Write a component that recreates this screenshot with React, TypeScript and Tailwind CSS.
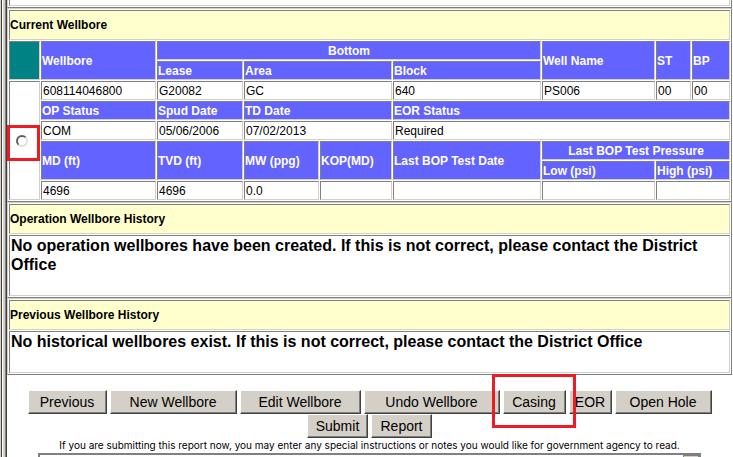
import type { ReactNode } from "react";

const edge =
  "border border-t-[#808080] border-l-[#808080] border-r-[#d4d0c8] border-b-[#d4d0c8]";
const outset =
  "border border-t-[#d4d0c8] border-l-[#d4d0c8] border-r-[#808080] border-b-[#808080]";

type CellProps = { children?: ReactNode; rows?: number; cols?: number; center?: boolean };

function Head({ children, rows, cols, center }: CellProps) {
  return (
    <th
      rowSpan={rows}
      colSpan={cols}
      className={`${edge} bg-[#6363ff] p-0 font-bold text-white ${center ? "text-center" : "text-left"}`}
    >
      {children}
    </th>
  );
}

function Data({ children, rows, cols }: CellProps) {
  return (
    <td rowSpan={rows} colSpan={cols} className={`${edge} bg-white px-px py-0`}>
      {children}
    </td>
  );
}

function Title({ children, cols }: { children: string; cols?: number }) {
  return (
    <tr className="h-[30px]">
      <th colSpan={cols} className={`${edge} bg-[#ffffce] p-0 text-left font-bold`}>
        {children}
      </th>
    </tr>
  );
}

const tableClass = "w-full table-fixed border-separate border-spacing-px text-xs leading-4";

function Message({ title, children, tall }: { title: string; children: string; tall?: boolean }) {
  return (
    <section className={outset}>
      <table className={tableClass}>
        <tbody>
          <Title>{title}</Title>
          <tr className={tall ? "h-[61px]" : "h-[42px]"}>
            <td className={`${edge} px-px py-0 align-top text-base leading-[19px] font-bold`}>{children}</td>
          </tr>
        </tbody>
      </table>
    </section>
  );
}

function Button({ children, width }: { children: string; width: string }) {
  return (
    <button
      type="button"
      className={`h-6 border border-t-white border-l-white border-r-[#404040] border-b-[#404040] bg-[#d4d0c8] text-center text-sm leading-5 shadow-[inset_-1px_-1px_0_#808080] ${width}`}
    >
      {children}
    </button>
  );
}

function WellboreTable() {
  return (
    <section className={outset}>
      <table className={tableClass}>
        <colgroup>
          <col className="w-[31px]" />
          <col className="w-[115px]" />
          <col className="w-[86px]" />
          <col className="w-[75px]" />
          <col className="w-[72px]" />
          <col />
          <col className="w-[113px]" />
          <col className="w-[35px]" />
          <col className="w-[38px]" />
        </colgroup>
        <tbody>
          <Title cols={9}>Current Wellbore</Title>
          <tr className="h-[19px]">
            <td rowSpan={2} className={`${edge} bg-[#008284]`} />
            <Head rows={2}>Wellbore</Head>
            <Head cols={4} center>Bottom</Head>
            <Head rows={2}>Well Name</Head>
            <Head rows={2}>ST</Head>
            <Head rows={2}>BP</Head>
          </tr>
          <tr className="h-[19px]">
            <Head>Lease</Head>
            <Head cols={2}>Area</Head>
            <Head>Block</Head>
          </tr>
          <tr className="h-[19px]">
            <td rowSpan={6} className={`${edge} bg-white p-0`}>
              <div className="relative flex justify-center pr-1.5">
                <input
                  type="radio"
                  name="wellbore"
                  aria-label="Select wellbore 608114046800"
                  className="size-3 appearance-none rounded-full border-2 border-t-[#606060] border-l-[#606060] border-r-[#e4e0d8] border-b-[#e4e0d8] bg-white"
                />
                <span className="pointer-events-none absolute -top-[10px] -left-[3px] h-9 w-[33px] border-3 border-[#ed1c24]" />
              </div>
            </td>
            <Data>608114046800</Data>
            <Data>G20082</Data>
            <Data cols={2}>GC</Data>
            <Data>640</Data>
            <Data>PS006</Data>
            <Data>00</Data>
            <Data>00</Data>
          </tr>
          <tr className="h-[19px]">
            <Head>OP Status</Head>
            <Head>Spud Date</Head>
            <Head cols={2}>TD Date</Head>
            <Head cols={4}>EOR Status</Head>
          </tr>
          <tr className="h-[19px]">
            <Data>COM</Data>
            <Data>05/06/2006</Data>
            <Data cols={2}>07/02/2013</Data>
            <Data cols={4}>Required</Data>
          </tr>
          <tr className="h-[19px]">
            <Head rows={2}>MD (ft)</Head>
            <Head rows={2}>TVD (ft)</Head>
            <Head rows={2}>MW (ppg)</Head>
            <Head rows={2}>KOP(MD)</Head>
            <Head rows={2}>Last BOP Test Date</Head>
            <Head cols={3} center>Last BOP Test Pressure</Head>
          </tr>
          <tr className="h-[19px]">
            <Head>Low (psi)</Head>
            <Head cols={2}>High (psi)</Head>
          </tr>
          <tr className="h-[19px]">
            <Data>4696</Data>
            <Data>4696</Data>
            <Data>0.0</Data>
            <Data />
            <Data />
            <Data />
            <Data cols={2} />
          </tr>
        </tbody>
      </table>
    </section>
  );
}

export default function App() {
  return (
    <div className="flex h-screen overflow-hidden bg-white font-['Liberation_Sans',Arial,sans-serif] text-black">
      <div className="flex shrink-0">
        <div className="w-px bg-[#d4d0c8]" />
        <div className="w-px bg-[#404040]" />
        <div className="w-px bg-white" />
        <div className="w-0.5 bg-[#d4d0c8]" />
        <div className="w-px bg-[#808080]" />
        <div className="w-px bg-[#404040]" />
      </div>
      <main className="min-w-0 flex-1 pr-px">
        <section className="border border-t-0 border-l-[#d4d0c8] border-r-[#808080] border-b-[#808080] px-px pb-px">
          <div className="h-1.5 border border-t-0 border-l-[#808080] border-r-[#d4d0c8] border-b-[#d4d0c8]" />
        </section>
        <WellboreTable />
        <Message title="Operation Wellbore History" tall>
          No operation wellbores have been created. If this is not correct, please contact the District Office
        </Message>
        <Message title="Previous Wellbore History">
          No historical wellbores exist. If this is not correct, please contact the District Office
        </Message>
        <form>
          <div className="mt-[15px] flex flex-wrap justify-center gap-x-[3px] px-4">
            <Button width="w-[79px]">Previous</Button>
            <Button width="w-[127px]">New Wellbore</Button>
            <Button width="w-[121px]">Edit Wellbore</Button>
            <Button width="w-[136px]">Undo Wellbore</Button>
            <div className="relative flex">
              <Button width="w-[63px]">Casing</Button>
              <span className="pointer-events-none absolute -top-4 -left-[11px] z-10 h-[54px] w-[84px] border-3 border-[#ed1c24]" />
            </div>
            <Button width="w-[43px]">EOR</Button>
            <Button width="w-[97px]">Open Hole</Button>
            <Button width="w-[61px]">Submit</Button>
            <Button width="w-[61px]">Report</Button>
          </div>
          <label htmlFor="notes" className="block text-center font-[Inter,Arial,sans-serif] text-[10px] leading-[15px]">
            If you are submitting this report now, you may enter any special instructions or notes you would like for government agency to read.
          </label>
          <div className="mx-[31px] flex h-20 border-2 border-[#808080] border-b-[#404040] bg-white">
            <textarea id="notes" className="min-w-0 flex-1 resize-none" />
            <div className="w-4 border border-[#808080] bg-[#d4d0c8]" />
          </div>
        </form>
      </main>
    </div>
  );
}
